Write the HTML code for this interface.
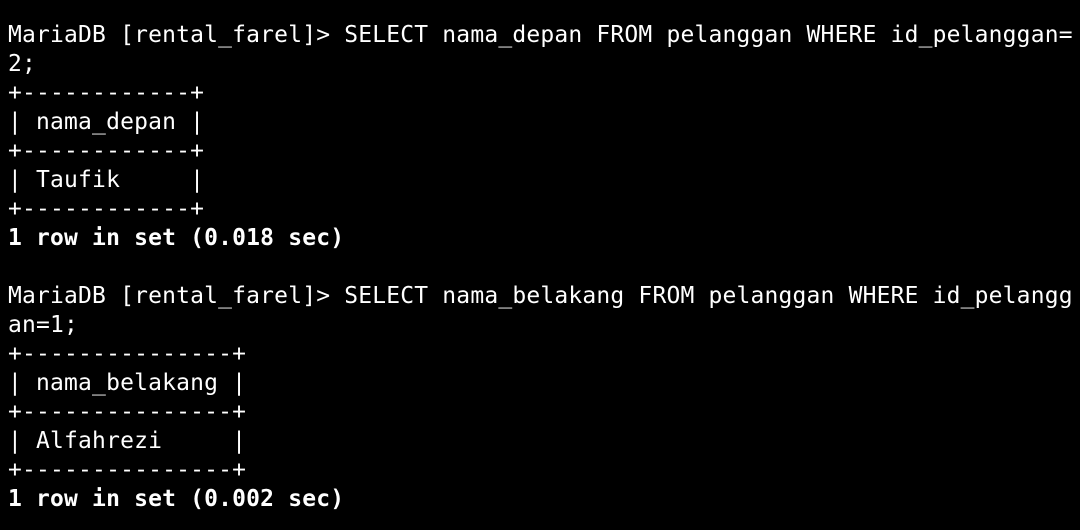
<!DOCTYPE html>
<html><head><meta charset="utf-8"><style>
html,body{margin:0;padding:0;background:#000;width:1080px;height:530px;overflow:hidden}
pre{margin:0;padding:21px 0 0 8px;color:#fff;font-family:"DejaVu Sans Mono","Liberation Mono",monospace;font-size:22.95px;letter-spacing:0.2px;line-height:29px;white-space:pre}
b{font-weight:bold}
</style></head><body><pre>MariaDB [rental_farel]&gt; SELECT nama_depan FROM pelanggan WHERE id_pelanggan=
2;
+------------+
| nama_depan |
+------------+
| Taufik     |
+------------+
<b>1 row in set (0.018 sec)</b>

MariaDB [rental_farel]&gt; SELECT nama_belakang FROM pelanggan WHERE id_pelangg
an=1;
+---------------+
| nama_belakang |
+---------------+
| Alfahrezi     |
+---------------+
<b>1 row in set (0.002 sec)</b></pre></body></html>
